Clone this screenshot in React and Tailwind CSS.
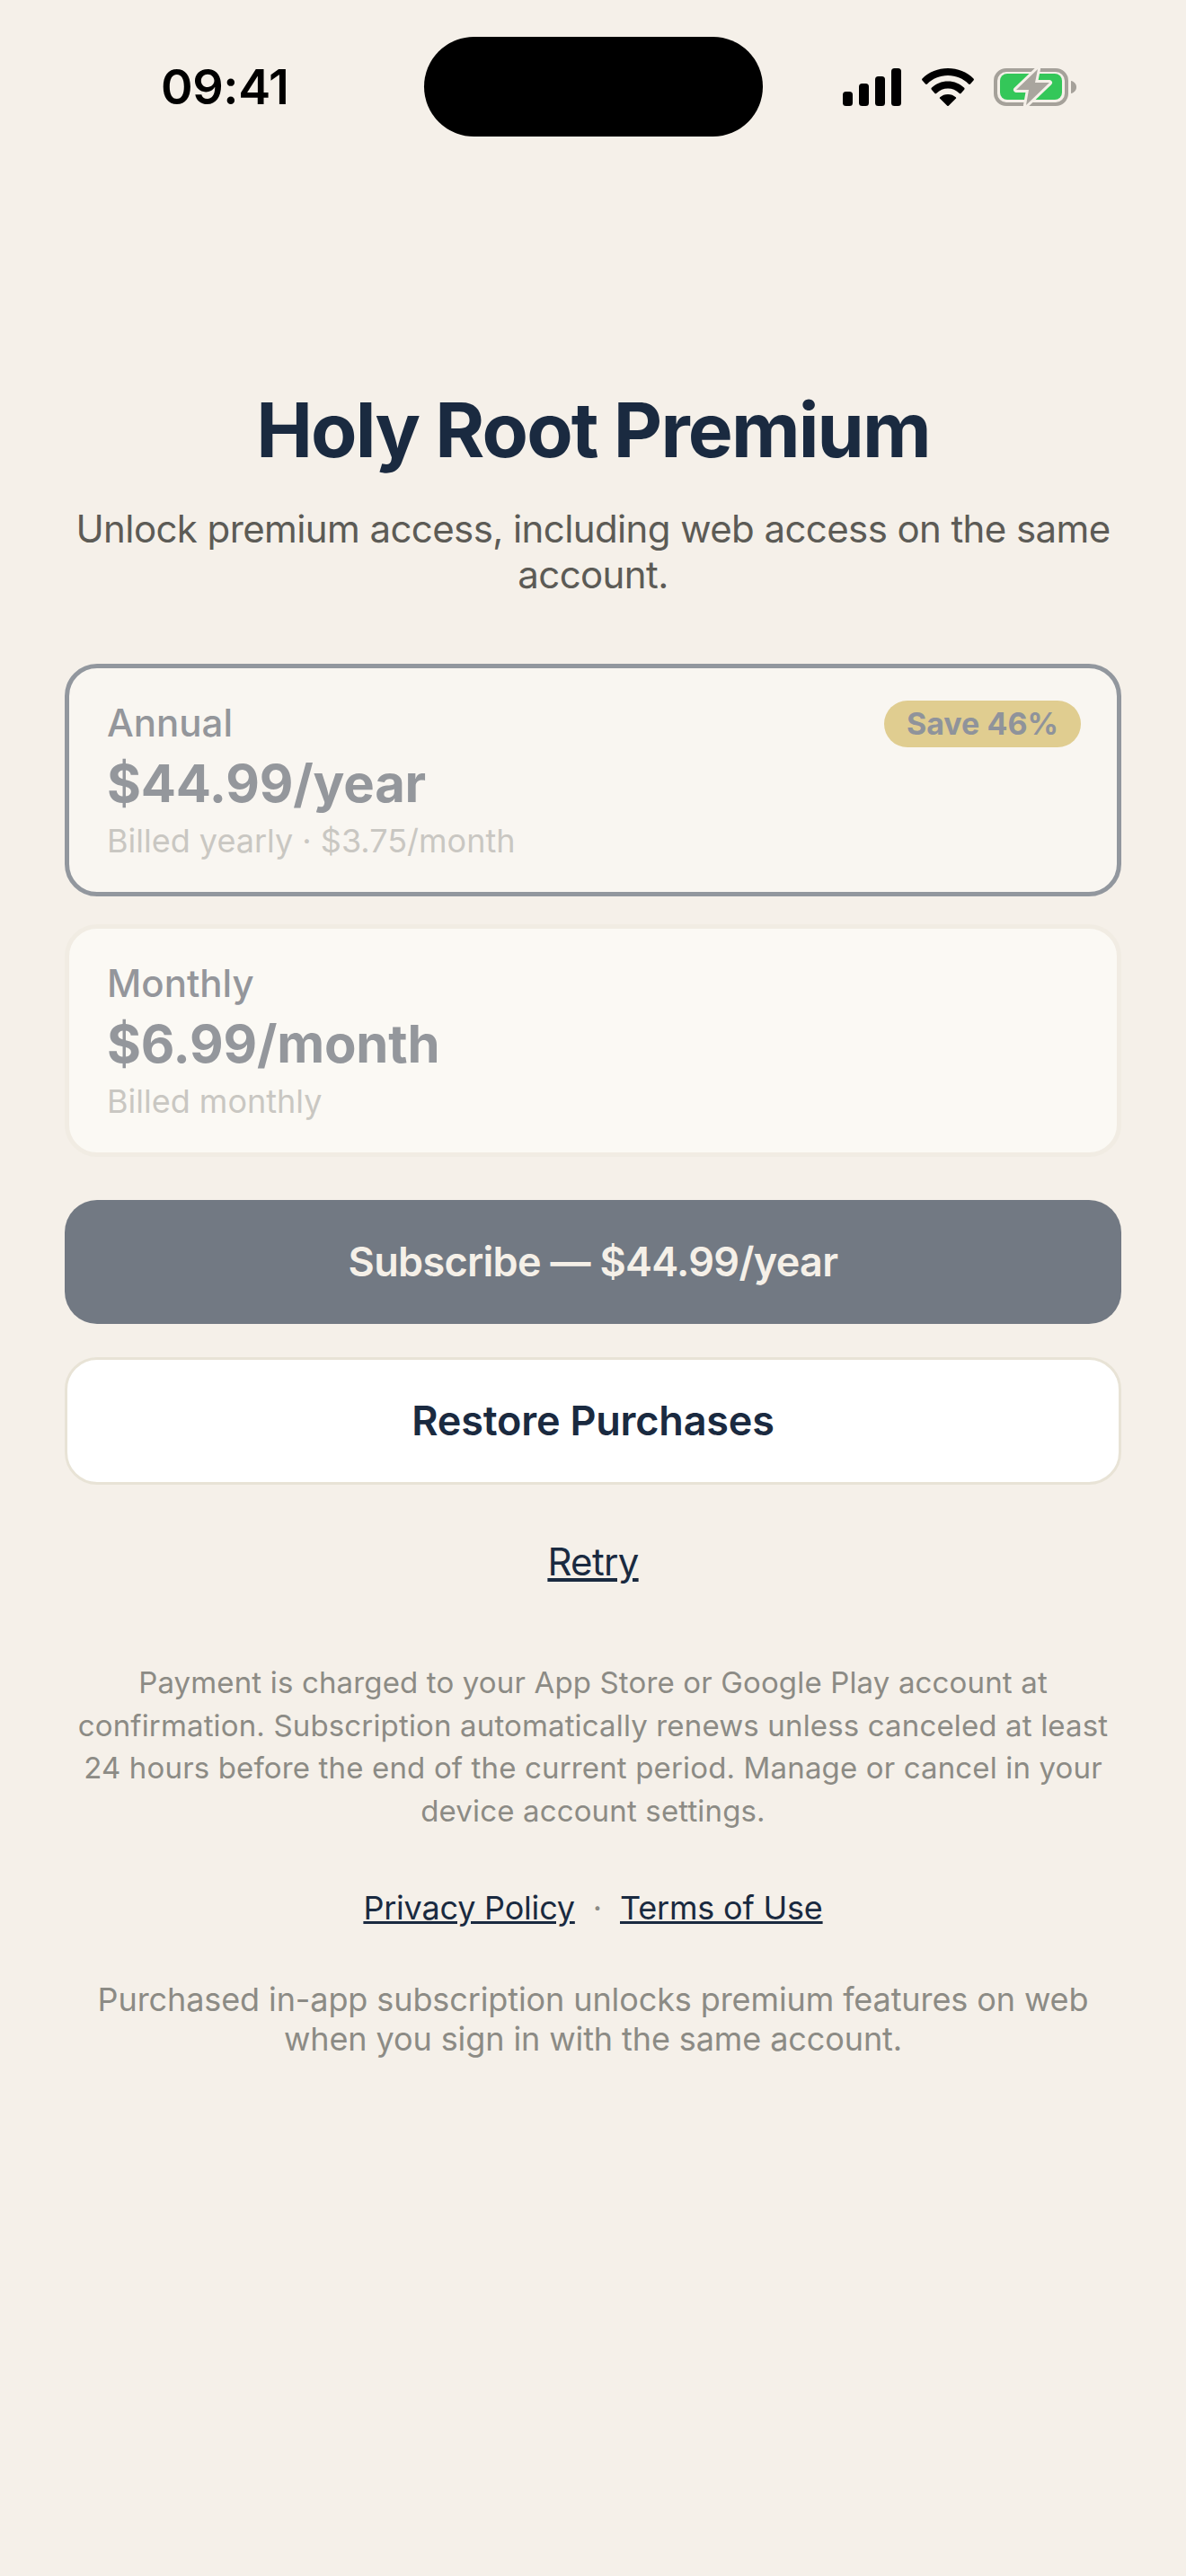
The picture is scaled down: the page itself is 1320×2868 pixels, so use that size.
import React from 'react'

const StatusIcons = () => (
    <div className="flex items-center gap-[22px]">
        <svg width="66" height="42" viewBox="0 0 66 42" fill="#000">
            <rect x="0" y="26" width="11" height="16" rx="3.5" />
            <rect x="18" y="17" width="11" height="25" rx="3.5" />
            <rect x="36" y="9" width="11" height="33" rx="3.5" />
            <rect x="54" y="0" width="11" height="42" rx="3.5" />
        </svg>
        <svg width="58" height="42" viewBox="0 0 58 42" fill="#000">
            <path d="M29 0C18 0 8 4 0.5 11.5a1.5 1.5 0 0 0 0 2L4 17.5a1.5 1.5 0 0 0 2 0C12 11.500 20 8 29 8s17 3.500 23 9.500a1.500 1.500 0 0 0 2 0l3.500-4a1.500 1.500 0 0 0 0-2C50 4 40 0 29 0Z" />
            <path d="M29 14.500c-7 0-13.500 2.700-18.200 7.300a1.500 1.500 0 0 0 0 2l3.500 3.900a1.500 1.500 0 0 0 2.100 0C20 24.300 24.300 22.500 29 22.500s9 1.800 12.600 5.200a1.500 1.500 0 0 0 2.100 0l3.500-3.900a1.500 1.500 0 0 0 0-2C42.500 17.200 36 14.500 29 14.500Z" />
            <path d="M29 29c-3.400 0-6.500 1.200-8.800 3.300a1 1 0 0 0 0 1.500L28 41.600a1.400 1.400 0 0 0 2 0l7.800-7.800a1 1 0 0 0 0-1.500C35.500 30.200 32.400 29 29 29Z" />
        </svg>
        <svg width="92" height="44" viewBox="0 0 92 44">
            <rect x="2" y="3" width="79" height="38" rx="12" fill="none" stroke="#a5a19a" strokeWidth="4" />
            <rect x="7" y="7" width="69" height="29" rx="8" fill="#34c759" />
            <path d="M86 15c3 .5 6 3 6 7s-3 6.500-6 7Z" fill="#a5a19a" />
            <path d="M49 2 25 25h14l-3 17 26-25H46Z" fill="#a9a59e" stroke="#f5f0e9" strokeWidth="6" strokeLinejoin="round" paintOrder="stroke" />
        </svg>
    </div>
)

const PlanCard = ({ name, price, note, badge, selected }) => (
    <div className={`h-[259px] rounded-[36px] border-[5px] pl-[42px] pr-[40px] pt-[33px] ${selected ? "border-[#92979e] bg-[#f9f6f1]" : "border-[#f1ece3] bg-[#fbf9f4]"}`}>
        <div className="flex items-start justify-between">
            <div>
                <p className="text-[42px] leading-[56px] font-medium text-[#94969b]">{name}</p>
                <p className="mt-[3px] text-[58px] leading-[72px] font-bold tracking-[-0.2px] text-[#94979c]">{price}</p>
                <p className="mt-[3px] text-[36px] leading-[50px] text-[#c9c7c2]">{note}</p>
            </div>
            {badge && (
                <span className="mt-[3px] rounded-full bg-[#e0cd90] px-[25px] text-[34px] leading-[52px] font-bold text-[#8f939b]">
                    {badge}
                </span>
            )}
        </div>
    </div>
)

const App = () => {
    return (
        <div className="min-h-[2868px] bg-[#f5f0e9] font-['Inter',sans-serif]">
            <div className="grid h-[193px] grid-cols-[1fr_377px_1fr] items-start pt-[41px]">
                <div className="flex h-[111px] items-center pl-[179px]">
                    <span className="text-[54px] font-semibold tracking-[-0.4px] text-black">09:41</span>
                </div>
                <div className="h-[111px] rounded-full bg-black"></div>
                <div className="flex h-[111px] items-center justify-end pr-[122px]">
                    <StatusIcons />
                </div>
            </div>

            <div className="px-[72px] pt-[232px]">
                <h1 className="text-center text-[84px] leading-[108px] font-bold tracking-[-1.85px] text-[#1a2a40]">Holy Root Premium</h1>
                <p className="mt-[30px] text-center text-[42px] leading-[51px] tracking-[-0.6px] text-[#5c5b56]">
                    Unlock premium access, including web access on the same account.
                </p>

                <div className="mt-[74px] flex flex-col gap-[31px]">
                    <PlanCard name="Annual" price="$44.99/year" note="Billed yearly · $3.75/month" badge="Save 46%" selected />
                    <PlanCard name="Monthly" price="$6.99/month" note="Billed monthly" />
                </div>

                <button className="mt-[48px] block h-[138px] w-full rounded-[36px] bg-[#727983] text-[45px] font-semibold tracking-[-0.7px] text-[#f5f0e8]">
                    Subscribe — $44.99/year
                </button>
                <button className="mt-[37px] block h-[142px] w-full rounded-[36px] border-[3px] border-[#e8e3d6] bg-white text-[45px] font-semibold tracking-[-0.2px] text-[#1a2a40]">
                    Restore Purchases
                </button>

                <p className="mt-[60px] text-center text-[42px] leading-[52px] tracking-[-0.7px]">
                    <a className="text-[#1a2a40] underline">Retry</a>
                </p>

                <p className="mt-[85px] px-[8px] text-center text-[33px] leading-[47.5px] tracking-[0.15px] text-[#8c8b85]">
                    Payment is charged to your App Store or Google Play account at confirmation. Subscription automatically renews unless canceled at least 24 hours before the end of the current period. Manage or cancel in your device account settings.
                </p>

                <div className="mt-[60px] flex items-center justify-center gap-[20px] text-[36px] leading-[48px] tracking-[-0.2px]">
                    <a className="text-[#1a2a40] underline">Privacy Policy</a>
                    <span className="text-[#8c8b85]">·</span>
                    <a className="text-[#1a2a40] underline">Terms of Use</a>
                </div>

                <p className="mt-[56px] px-[20px] text-center text-[36px] leading-[44px] tracking-[-0.1px] text-[#8c8b85]">
                    Purchased in-app subscription unlocks premium features on web when you sign in with the same account.
                </p>
            </div>
        </div>
    )
}

export default App
